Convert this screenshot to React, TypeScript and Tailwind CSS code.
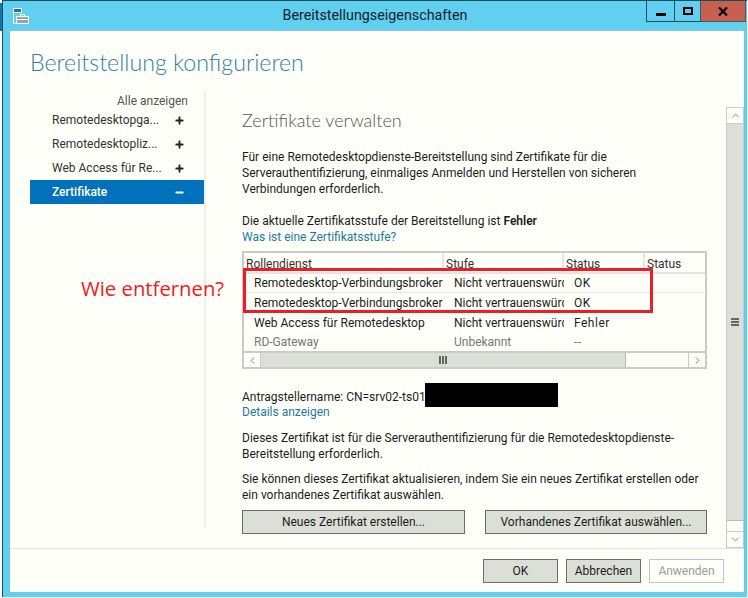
import React from 'react';
import { ChevronUp, ChevronDown, ChevronLeft, ChevronRight, Plus, Minus } from 'lucide-react';

const navItems = ['Remotedesktopga...', 'Remotedesktopliz...', 'Web Access für Re...'];

const rows = [
    { role: 'Remotedesktop-Verbindungsbroker', level: 'Nicht vertrauenswürdig', status: 'OK', h: 'h-[19px]', line: true },
    { role: 'Remotedesktop-Verbindungsbroker', level: 'Nicht vertrauenswürdig', status: 'OK', h: 'h-[20px] pb-[1px]', line: false },
    { role: 'Web Access für Remotedesktop', level: 'Nicht vertrauenswürdig', status: 'Fehler', h: 'h-[20px]', line: false },
    { role: 'RD-Gateway', level: 'Unbekannt', status: '--', h: 'h-[18px]', line: false, muted: true },
];

const WinButton: React.FC<{ label: string; className: string; disabled?: boolean }> = ({ label, className, disabled }) => (
    <button
        type="button"
        className={`h-[24px] border text-[12px] ${className} ${disabled ? 'border-[#b9c6cc] text-[#9a9c98] bg-[#fffff9]' : 'border-[#6c6e68] bg-[#dcdfd8] text-[#1c1c1c]'}`}
    >
        {label}
    </button>
);

const App: React.FC = () => {
    return (
        <div className="relative w-[748px] h-[598px] overflow-hidden bg-[#fffff9] font-['Roboto',sans-serif] text-[12px] text-[#1c1c1c]">
            {/* bit of the desktop behind the window */}
            <div className="absolute left-0 top-[3px] h-[28px] w-[2px] bg-[#1a6fb0]" />
            <div className="ml-[2px] flex h-[597px] w-[745px] flex-col border-l border-t border-[#16505f] bg-[#60cff0]">
                {/* title bar */}
                <div className="relative flex h-[30px] shrink-0 items-center justify-center border-b border-[#8fc3d6]">
                    <svg className="absolute left-[9px] top-[6px]" width="18" height="18" viewBox="0 0 18 18" fill="none" stroke="#fff" strokeWidth="1">
                        <rect x="1.5" y="1.5" width="8" height="4" fill="#2c6fa8" />
                        <path d="M1.5 5.5v11h4" />
                        <rect x="4.5" y="9.5" width="12" height="7" fill="#8fa7b0" />
                        <path d="M8.5 9.5v-2h4v2M4.5 12.5h12" />
                    </svg>
                    <span className="text-[14.3px] text-[#10222a]">Bereitstellungseigenschaften</span>
                    <div className="absolute right-[1px] top-0 flex h-[21px] items-stretch">
                        <div className="flex w-[28px] items-end justify-center border-l border-b border-[#16505f] pb-[5px]">
                            <span className="block h-[3px] w-[10px] bg-black" />
                        </div>
                        <div className="flex w-[26px] items-center justify-center border-l border-b border-[#16505f]">
                            <span className="block h-[8px] w-[10px] border-2 border-black" />
                        </div>
                        <div className="flex w-[46px] items-center justify-center border-x border-b border-[#3d5a5e] bg-[#c7604e]">
                            <svg width="10" height="9" viewBox="0 0 10 9"><path d="M1 0.5L9 8.5M9 0.5L1 8.5" stroke="#000" strokeWidth="2.2" /></svg>
                        </div>
                    </div>
                </div>

                {/* dialog body */}
                <div className="mb-[5px] ml-[7px] mr-[3px] flex min-h-0 flex-1 flex-col bg-[#fffff9]">
                    <div className="flex min-h-0 flex-1 flex-col">
                        <h1 className="h-[60px] shrink-0 pl-[20px] pt-[15px] text-[23.2px] leading-[32px] font-light font-['Lato',sans-serif] text-[#2f7f9f]">
                            Bereitstellung konfigurieren
                        </h1>
                        <div className="flex min-h-0 flex-1">
                            {/* left nav */}
                            <div className="ml-[20px] mb-[20px] w-[174px] shrink-0">
                                <div className="h-[17px] pr-[16px] pt-[1px] text-right text-[#555]">Alle anzeigen</div>
                                {navItems.map((item) => (
                                    <div key={item} className="flex h-[24px] items-center justify-between pl-[22px] pr-[19px] text-[#333]">
                                        <span>{item}</span>
                                        <Plus size={11} strokeWidth={4} className="text-[#222]" />
                                    </div>
                                ))}
                                <div className="flex h-[24px] items-center justify-between bg-[#0072bc] pl-[22px] pr-[19px] font-medium text-white">
                                    <span>Zertifikate</span>
                                    <Minus size={11} strokeWidth={4} />
                                </div>
                            </div>
                            <div className="mb-[20px] w-[2px] shrink-0 bg-[#eef0e9]" />

                            {/* main pane */}
                            <div className="min-w-0 flex-1 pl-[36px] pr-[20px] pt-[16px]">
                                <h2 className="h-[26px] text-[18px] leading-[26px] font-light font-['Lato',sans-serif] text-[#555]">Zertifikate verwalten</h2>
                                <p className="mt-[16px] leading-[16px]">
                                    Für eine Remotedesktopdienste-Bereitstellung sind Zertifikate für die
                                    <br />
                                    Serverauthentifizierung, einmaliges Anmelden und Herstellen von sicheren
                                    <br />
                                    Verbindungen erforderlich.
                                </p>
                                <p className="mt-[16px] leading-[16px]">
                                    Die aktuelle Zertifikatsstufe der Bereitstellung ist <b className="font-semibold">Fehler</b>
                                </p>
                                <a className="block leading-[17px] text-[#1f7a9e]">Was ist eine Zertifikatsstufe?</a>

                                {/* table */}
                                <div className="mt-[5px] w-[465px] border-2 border-[#c9ccc6] bg-[#fffff9]">
                                    <div className="flex h-[21px] overflow-hidden border-b-2 border-[#e4e7e1] text-[#333]">
                                        <div className="w-[200px] border-r-2 border-[#e4e7e1] pl-[2px] pt-[2px]">Rollendienst</div>
                                        <div className="w-[120px] border-r-2 border-[#e4e7e1] pl-[2px] pt-[2px]">Stufe</div>
                                        <div className="w-[81px] border-r-2 border-[#e4e7e1] pl-[2px] pt-[2px]">Status</div>
                                        <div className="flex-1 pl-[2px] pt-[2px]">Status</div>
                                    </div>
                                    {rows.map((r, i) => (
                                        <div key={i} className={`flex ${r.h} items-center ${r.line ? 'border-b border-[#e4e7e1]' : ''} ${r.muted ? 'text-[#777]' : 'text-[#1c1c1c]'}`}>
                                            <div className="w-[200px] overflow-hidden whitespace-nowrap pl-[10px]">{r.role}</div>
                                            <div className="w-[120px] overflow-hidden whitespace-nowrap pl-[10px]">{r.level}</div>
                                            <div className="flex-1 pl-[10px] tracking-[0.5px]">{r.status}</div>
                                        </div>
                                    ))}
                                    {/* horizontal scrollbar */}
                                    <div className="flex h-[16px] items-stretch border-t-2 border-[#c9ccc6]">
                                        <div className="flex w-[17px] items-center justify-center border-r border-[#c9ccc6]"><ChevronLeft size={11} className="text-[#777]" /></div>
                                        <div className="flex w-[365px] items-center justify-center gap-[1px] border-r border-[#b9bcb6] bg-[#dcdfd8]">
                                            <span className="block h-[8px] w-[2px] bg-[#666]" />
                                            <span className="block h-[8px] w-[2px] bg-[#666]" />
                                            <span className="block h-[8px] w-[2px] bg-[#666]" />
                                        </div>
                                        <div className="flex-1" />
                                        <div className="flex w-[17px] items-center justify-center border-l border-[#c9ccc6]"><ChevronRight size={11} className="text-[#777]" /></div>
                                    </div>
                                </div>

                                <p className="mt-[20px] leading-[16px]">Antragstellername: CN=srv02-ts01.</p>
                                <a className="block leading-[14px] text-[#1f7a9e]">Details anzeigen</a>
                                <p className="mt-[11px] leading-[16px]">
                                    Dieses Zertifikat ist für die Serverauthentifizierung für die Remotedesktopdienste-
                                    <br />
                                    Bereitstellung erforderlich.
                                </p>
                                <p className="mt-[9px] leading-[16px]">
                                    Sie können dieses Zertifikat aktualisieren, indem Sie ein neues Zertifikat erstellen oder
                                    <br />
                                    ein vorhandenes Zertifikat auswählen.
                                </p>
                                <div className="mt-[7px] flex w-[465px] justify-between">
                                    <WinButton label="Neues Zertifikat erstellen..." className="w-[223px]" />
                                    <WinButton label="Vorhandenes Zertifikat auswählen..." className="w-[222px]" />
                                </div>
                            </div>

                            {/* vertical scrollbar */}
                            <div className="mt-[16px] flex w-[18px] shrink-0 flex-col border border-[#c9ccc6] bg-[#fffff9]">
                                <div className="flex h-[16px] items-center justify-center border-b border-[#c9ccc6]"><ChevronUp size={11} className="text-[#777]" /></div>
                                <div className="flex h-[397px] flex-col items-center justify-center gap-[1px] border-b border-[#b9bcb6] bg-[#dcdfd8]">
                                    <span className="block h-[2px] w-[8px] bg-[#666]" />
                                    <span className="block h-[2px] w-[8px] bg-[#666]" />
                                    <span className="block h-[2px] w-[8px] bg-[#666]" />
                                </div>
                                <div className="flex-1" />
                                <div className="flex h-[16px] items-center justify-center border-t border-[#c9ccc6]"><ChevronDown size={11} className="text-[#777]" /></div>
                            </div>
                        </div>
                    </div>

                    {/* footer */}
                    <div className="flex h-[44px] shrink-0 items-center justify-end gap-[8px] border-t border-[#e1e4de] pr-[20px] pt-[1px]">
                        <WinButton label="OK" className="w-[75px]" />
                        <WinButton label="Abbrechen" className="w-[75px]" />
                        <WinButton label="Anwenden" className="w-[75px]" disabled />
                    </div>
                </div>
            </div>

            {/* annotations drawn on top of the screenshot */}
            <div className="absolute left-[243px] top-[268px] h-[45px] w-[410px] border-[3px] border-[#ee1c25]" />
            <div className="absolute left-[81px] top-[274px] font-['Open_Sans',sans-serif] text-[20.3px] leading-[28px] text-[#ee1c25]">Wie entfernen?</div>
            <div className="absolute left-[425px] top-[383px] h-[24px] w-[133px] bg-black" />
        </div>
    );
};

export default App;
